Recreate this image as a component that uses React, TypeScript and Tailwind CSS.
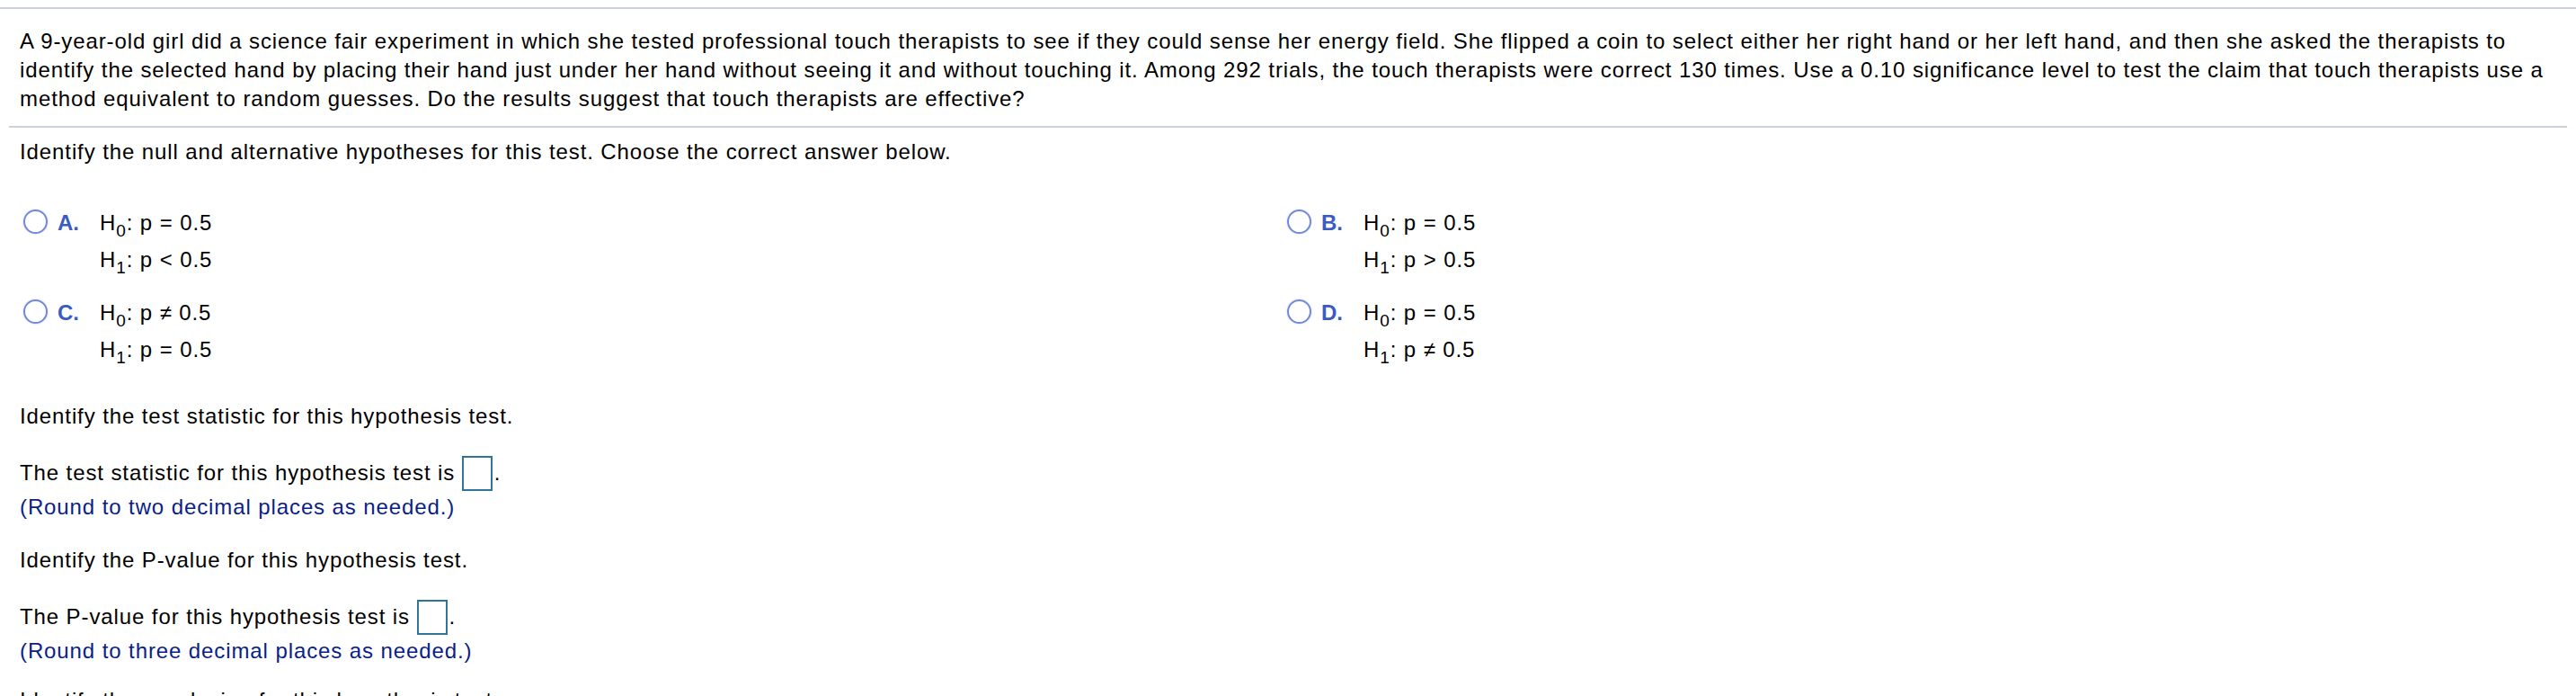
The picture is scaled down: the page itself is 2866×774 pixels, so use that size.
const options = [
  { letter: 'A', h0: '=', h1: '<' },
  { letter: 'B', h0: '=', h1: '>' },
  { letter: 'C', h0: '≠', h1: '=' },
  { letter: 'D', h0: '=', h1: '≠' },
];

const Hyp = ({ sub, op }: { sub: string; op: string }) => (
  <div className="whitespace-nowrap">
    H<span className="text-[19px] leading-none align-[-7px]">{sub}</span>: p {op} 0.5
  </div>
);

const AnswerBox = () => (
  <span className="inline-block w-[34px] h-[39px] border-2 border-[#2f7499] align-[-10px] -mb-[2px] -mt-[4px]" />
);

export default function App() {
  return (
    <div
      className="min-h-screen bg-white pt-[8px] text-black text-[24px] leading-[32px] tracking-[0.9px]"
      style={{ fontFamily: '"Liberation Sans", Arial, sans-serif' }}
    >
      <div className="h-[2px] bg-[#cdd1dc]" />

      <div className="mx-[10px]">
        <div className="px-[12px] pt-[20px] pb-[14px] border-b-2 border-[#cdd1dc]">
          A 9-year-old girl did a science fair experiment in which she tested professional touch therapists to see if
          they could sense her energy field. She flipped a coin to select either her right hand or her left hand, and
          then she asked the therapists to identify the selected hand by placing their hand just under her hand without
          seeing it and without touching it. Among 292 trials, the touch therapists were correct 130 times. Use a 0.10
          significance level to test the claim that touch therapists use a method equivalent to random guesses. Do the
          results suggest that touch therapists are effective?
        </div>

        <div className="px-[12px] pt-[11px]">
          Identify the null and alternative hypotheses for this test. Choose the correct answer below.
        </div>

        <div className="grid grid-cols-[1406px_1fr] gap-y-[18px] pl-[16px] mt-[42px] leading-[41px]">
          {options.map((o) => (
            <div key={o.letter} className="flex items-start">
              <span className="mt-[6px] w-[27px] h-[27px] rounded-full border-2 border-[#7389d8] shadow-[0_0_2px_rgba(115,137,216,0.5)] shrink-0" />
              <span className="ml-[11px] w-[47px] font-bold text-[#3b5bc4] tracking-normal">{o.letter}.</span>
              <div>
                <Hyp sub="0" op={o.h0} />
                <Hyp sub="1" op={o.h1} />
              </div>
            </div>
          ))}
        </div>

        <div className="px-[12px] mt-[38px]">Identify the test statistic for this hypothesis test.</div>

        <div className="px-[12px] mt-[28px] leading-[38px]">
          <div>
            The test statistic for this hypothesis test is <AnswerBox />
            <span className="ml-[2px]">.</span>
          </div>
          <div className="text-[#0a1e8a]">(Round to two decimal places as needed.)</div>
        </div>

        <div className="px-[12px] mt-[24px]">Identify the P-value for this hypothesis test.</div>

        <div className="px-[12px] mt-[28px] leading-[38px]">
          <div>
            The P-value for this hypothesis test is <AnswerBox />
            <span className="ml-[2px]">.</span>
          </div>
          <div className="text-[#0a1e8a]">(Round to three decimal places as needed.)</div>
        </div>

        <div className="px-[12px] mt-[20px]">Identify the conclusion for this hypothesis test.</div>
      </div>
    </div>
  );
}
